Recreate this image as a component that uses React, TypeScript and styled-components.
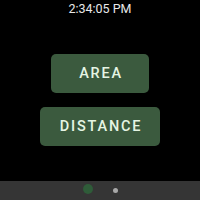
import styled, { createGlobalStyle } from "styled-components"

const GlobalStyle = createGlobalStyle`
  html, body {
    margin: 0;
    padding: 0;
    background: #000;
  }
  #root {
    width: 200px;
    height: 200px;
  }
`;

const Screen = styled.div`
  width: 200px;
  height: 200px;
  display: flex;
  flex-direction: column;
  background: #000;
  font-family: Roboto, 'Noto Sans', sans-serif;
  overflow: hidden;
`;

const Clock = styled.div`
  height: 18px;
  display: flex;
  justify-content: center;
  align-items: center;
  color: #e8e8e8;
  font-size: 12.5px;
  line-height: 1;
`;

const Menu = styled.div`
  flex: 1;
  display: flex;
  flex-direction: column;
  align-items: center;
  justify-content: center;
  gap: 14px;
  padding-top: 1px;
`;

const MenuButton = styled.button<{ $width: number }>`
  width: ${p => p.$width}px;
  height: 39px;
  border: none;
  border-radius: 5px;
  background: #3b5a3e;
  color: #e6f5e4;
  font-family: Roboto, 'Noto Sans', sans-serif;
  font-weight: 500;
  font-size: 14.5px;
  letter-spacing: 1.8px;
  padding: 0 0 0 2px;
`;

const PagerBar = styled.div`
  height: 18px;
  background: #353535;
  display: flex;
  align-items: center;
  justify-content: center;
  gap: 20px;
  padding-bottom: 1px;
`;

const Dot = styled.div<{ $active?: boolean }>`
  width: ${p => (p.$active ? 10 : 5)}px;
  height: ${p => (p.$active ? 10 : 5)}px;
  border-radius: 50%;
  background: ${p => (p.$active ? "#2f5c39" : "#a8a8a8")};
  margin-top: ${p => (p.$active ? -2 : 0)}px;
`;

export default function App() {
  return (
    <>
      <GlobalStyle />
      <Screen>
        <Clock>2:34:05 PM</Clock>
        <Menu>
          <MenuButton $width={98}>AREA</MenuButton>
          <MenuButton $width={120}>DISTANCE</MenuButton>
        </Menu>
        <PagerBar>
          <Dot $active />
          <Dot />
        </PagerBar>
      </Screen>
    </>
  )
}
